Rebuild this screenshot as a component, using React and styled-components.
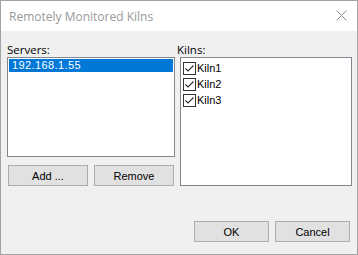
import React from 'react'
import styled, {createGlobalStyle} from 'styled-components'

const Global = createGlobalStyle`
  html, body {
    margin: 0;
    padding: 0;
    background: #fff;
  }
`

const servers = ['192.168.1.55']
const kilns = ['Kiln1', 'Kiln2', 'Kiln3']

function CloseIcon() {
  return (
    <svg width="11" height="11" viewBox="0 0 11 11">
      <path d="M0.5 0.5 L10.5 10.5 M10.5 0.5 L0.5 10.5" stroke="#8a8a8a" strokeWidth="1" fill="none"/>
    </svg>
  )
}

function CheckBox({checked}) {
  return (
    <Box>
      {checked && (
        <svg width="11" height="11" viewBox="0 0 11 11">
          <path d="M1.5 5.5 L4 8 L9.5 2.5" stroke="#333" strokeWidth="1.2" fill="none"/>
        </svg>
      )}
    </Box>
  )
}

function App() {
  return (
    <>
      <Global/>
      <Window>
        <TitleBar>
          <span>Remotely Monitored Kilns</span>
          <CloseIcon/>
        </TitleBar>
        <Body>
          <Columns>
            <Column>
              <Label>Servers:</Label>
              <ListBox $height={100} $width={168}>
                {servers.map(s => (
                  <ListItem key={s} $selected>{s}</ListItem>
                ))}
              </ListBox>
              <ButtonRow>
                <Button $width={80}>Add ...</Button>
                <Button $width={80}>Remove</Button>
              </ButtonRow>
            </Column>
            <Column>
              <Label $shift={-3}>Kilns:</Label>
              <ListBox $height={129} $width={172} $pad={2}>
                {kilns.map(k => (
                  <CheckRow key={k}>
                    <CheckBox checked/>
                    <span>{k}</span>
                  </CheckRow>
                ))}
              </ListBox>
            </Column>
          </Columns>
          <Footer>
            <Button $width={75}>OK</Button>
            <Button $width={75}>Cancel</Button>
          </Footer>
        </Body>
      </Window>
    </>
  )
}

export default App

const Window = styled.div`
  width: 358px;
  height: 255px;
  box-sizing: border-box;
  border: 1px solid #a3a3a3;
  display: flex;
  flex-direction: column;
  font-family: "Liberation Sans", Arial, sans-serif;
  font-size: 11px;
  color: #000;
`

const TitleBar = styled.div`
  height: 30px;
  flex: none;
  background: #fff;
  display: flex;
  align-items: center;
  justify-content: space-between;
  padding: 0 10px 0 8px;
  font-family: "Open Sans", "Noto Sans", sans-serif;
  font-size: 12px;
  color: #999;
  svg {
    margin-top: -1px;
  }
`

const Body = styled.div`
  flex: 1;
  background: #f0f0f0;
  display: flex;
  flex-direction: column;
  padding: 12px 6px 12px 6px;
`

const Columns = styled.div`
  display: flex;
  gap: 5px;
`

const Column = styled.div`
  display: flex;
  flex-direction: column;
`

const Label = styled.div`
  font-family: "Open Sans", "Noto Sans", sans-serif;
  font-size: 11.5px;
  line-height: 14px;
  margin: 0 0 0 ${p => p.$shift || 0}px;
  height: 14px;
`

const ListBox = styled.div`
  box-sizing: border-box;
  height: ${p => p.$height}px;
  width: ${p => p.$width}px;
  background: #fff;
  border: 1px solid #828790;
  padding: ${p => p.$pad || 1}px 1px;
`

const ListItem = styled.div`
  height: 13px;
  line-height: 13px;
  padding-left: 3px;
  letter-spacing: 0.4px;
  background: ${p => p.$selected ? '#0078d7' : 'transparent'};
  color: ${p => p.$selected ? '#fff' : '#000'};
`

const CheckRow = styled.div`
  display: flex;
  align-items: center;
  height: 16px;
  padding-left: 1px;
  span {
    margin-left: 1px;
  }
`

const Box = styled.div`
  width: 13px;
  height: 13px;
  box-sizing: border-box;
  border: 1px solid #333;
  background: #fff;
  display: flex;
  align-items: center;
  justify-content: center;
`

const ButtonRow = styled.div`
  display: flex;
  gap: 6px;
  margin: 8px 1px 0;
`

const Button = styled.button`
  width: ${p => p.$width}px;
  height: 21px;
  box-sizing: border-box;
  background: #e1e1e1;
  border: 1px solid #adadad;
  font-family: "Liberation Sans", Arial, sans-serif;
  font-size: 11px;
  color: #000;
  padding: 0;
`

const Footer = styled.div`
  margin-top: auto;
  display: flex;
  justify-content: flex-end;
  gap: 6px;
  padding-right: 1px;
`
